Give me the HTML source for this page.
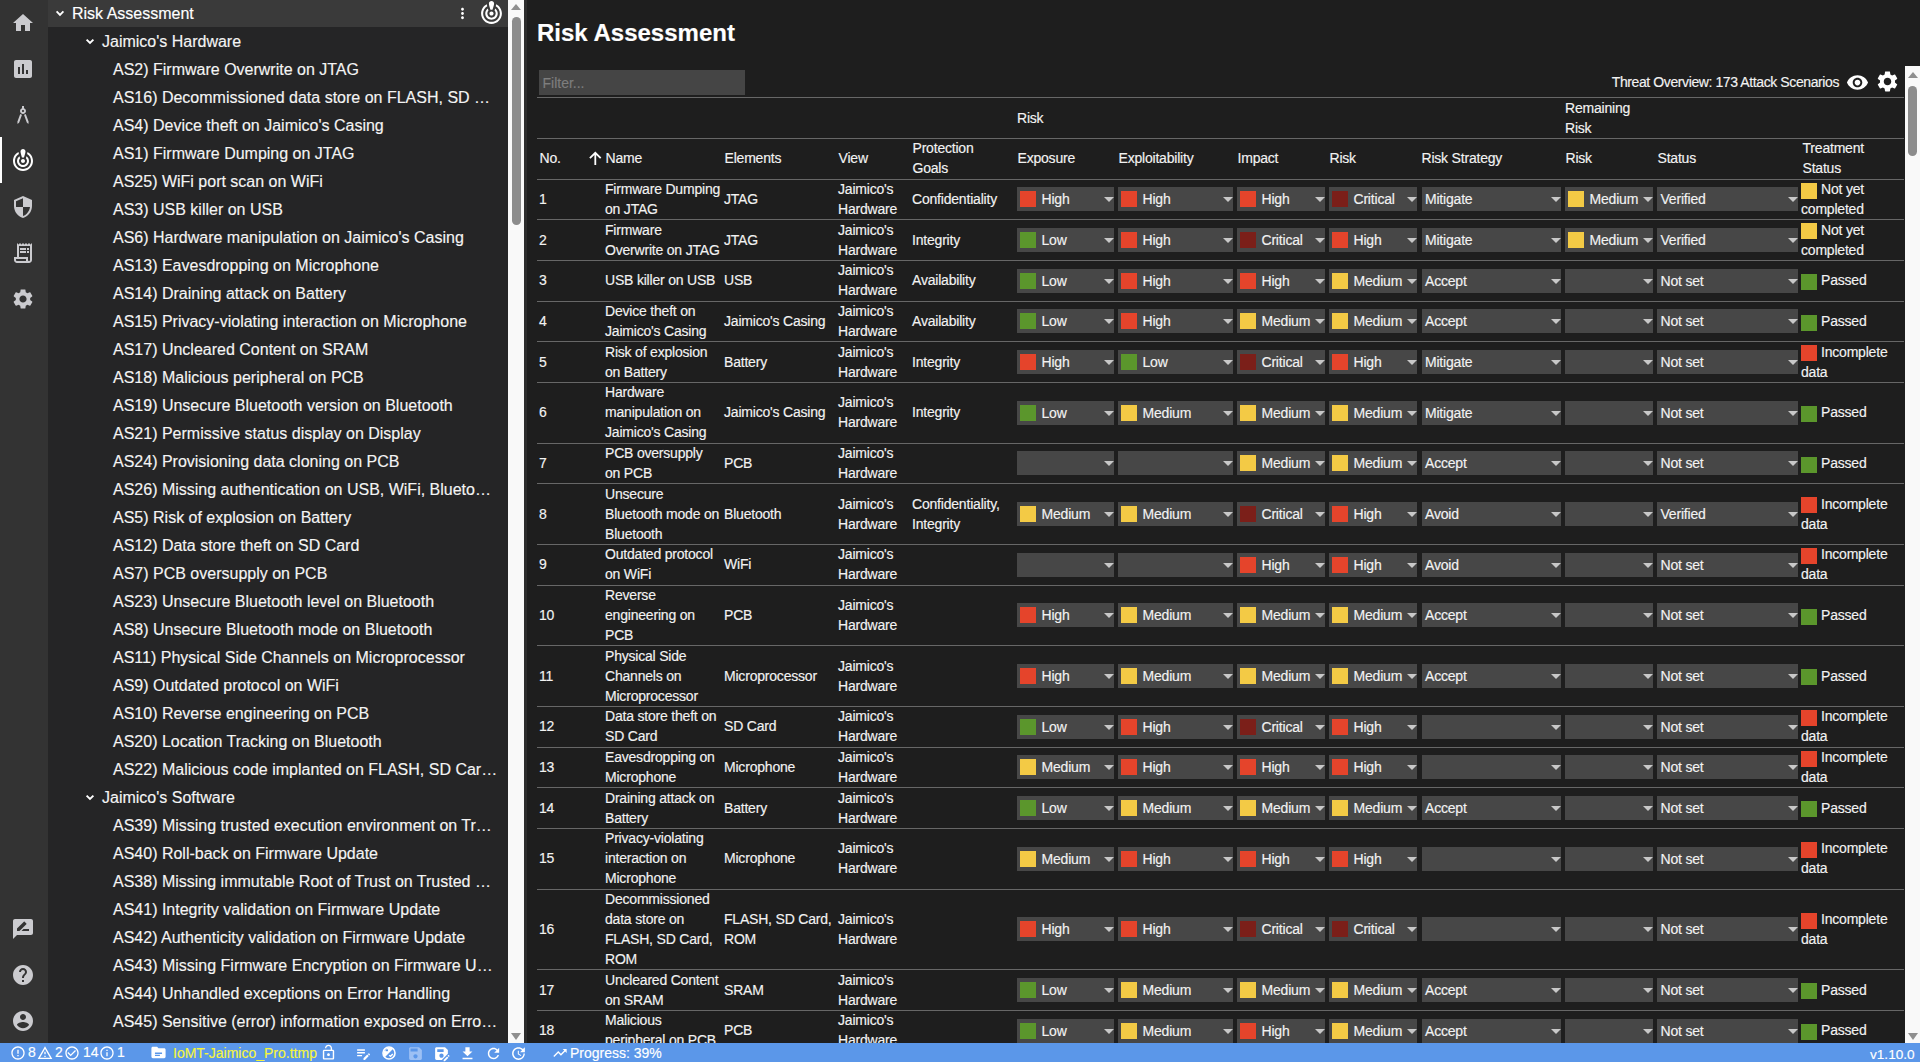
<!DOCTYPE html>
<html><head><meta charset="utf-8"><title>Risk Assessment</title>
<style>
*{box-sizing:border-box;margin:0;padding:0}
html,body{width:1920px;height:1062px;overflow:hidden;background:#1e1e1e;font-family:"Liberation Sans",sans-serif;color:#fff}
body{-webkit-text-stroke:0.15px currentColor}
.abs{position:absolute}
#act{position:absolute;left:0;top:0;width:48px;height:1043px;background:#333333}
#side{position:absolute;left:48px;top:0;width:460px;height:1043px;background:#252526;overflow:hidden}
#sidehdr{position:absolute;left:0;top:0;width:460px;height:27px;background:#3a3a3a}
.ti{position:absolute;height:28px;line-height:28px;font-size:16px;color:#f4f4f4;white-space:nowrap}
#sscroll{position:absolute;left:508px;top:0;width:16px;height:1043px;background:#f9f9f9}
#sash{position:absolute;left:524px;top:0;width:3px;height:1043px;background:#2d2d2d}
#main{position:absolute;left:527px;top:0;width:1378px;height:1043px;background:#1e1e1e;overflow:hidden}
#mscroll{position:absolute;left:1905px;top:66px;width:15px;height:977px;background:#f9f9f9}
#status{position:absolute;left:0;top:1043px;width:1920px;height:19px;background:#5b97e9;color:#fff;font-size:14px}
.hl{position:absolute;left:537px;width:1367px;height:1px;background:#676767}
.t{position:absolute;font-size:14px;letter-spacing:-0.2px;line-height:20px;color:#f2f2f2;white-space:nowrap}
.sel{position:absolute;height:24px;background:#474747}
.sw{position:absolute;width:16px;height:16px}
.st{position:absolute;font-size:14px;letter-spacing:-0.2px;line-height:24px;color:#f2f2f2;white-space:nowrap;top:0px}
.arr{position:absolute;right:0;top:10px;width:0;height:0;border-left:5px solid transparent;border-right:5px solid transparent;border-top:5px solid #c8c8c8}
</style></head><body>

<div id="act">
<div class="abs" style="left:0;top:137px;width:2px;height:46px;background:#ffffff"></div>
<svg style="position:absolute;left:11.3px;top:10.9px;width:24px;height:24px" viewBox="0 0 24 24"><path fill="#cbcbcf" d="M10 20v-6h4v6h5v-8h3L12 3 2 12h3v8z"/></svg>
<svg style="position:absolute;left:11.3px;top:56.9px;width:24px;height:24px" viewBox="0 0 24 24"><path fill="#cbcbcf" d="M19 3H5c-1.1 0-2 .9-2 2v14c0 1.1.9 2 2 2h14c1.1 0 2-.9 2-2V5c0-1.1-.9-2-2-2zM9 17H7v-7h2v7zm4 0h-2V7h2v10zm4 0h-2v-4h2v4z"/></svg>
<svg style="position:absolute;left:11.3px;top:102.9px;width:24px;height:24px" viewBox="0 0 24 24"><path fill="#cbcbcf" d="M6.36,18.78L6.61,21l1.62-1.54l2.77-7.6c-0.68-0.17-1.28-0.51-1.77-0.98L6.36,18.78z M14.77,10.88c-0.49,0.47-1.1,0.81-1.77,0.98l2.77,7.6L17.39,21l0.26-2.22L14.77,10.88z M15,8c0-1.3-0.84-2.4-2-2.82V3h-2v2.18C9.840,5.6,9,6.7,9,8c0,1.66,1.34,3,3,3S15,9.66,15,8z M12,9c-0.55,0-1-0.45-1-1c0-0.55,0.45-1,1-1s1,0.45,1,1C13,8.55,12.55,9,12,9z"/></svg>
<svg style="position:absolute;left:11.3px;top:148.9px;width:24px;height:24px" viewBox="0 0 24 24"><path fill="#ffffff" d="M14.5,2.5c0,1.5-1.5,6-1.5,6h-2c0,0-1.5-4.5-1.5-6C9.5,1.12,10.62,0,12,0S14.5,1.12,14.5,2.5z M12,10c-1.1,0-2,0.9-2,2s0.9,2,2,2s2-0.9,2-2S13.1,10,12,10z M16.08,5.11c0.18-0.75,0.33-1.47,0.39-2.06C19.75,4.690,22,8.08,22,12c0,5.52-4.48,10-10,10S2,17.52,2,12c0-3.92,2.25-7.31,5.53-8.95C7.6,3.64,7.74,4.37,7.92,5.11C5.58,6.51,4,9.07,4,12c0,4.42,3.58,8,8,8s8-3.58,8-8C20,9.07,18.42,6.51,16.08,5.11z M18,12c0,3.31-2.69,6-6,6s-6-2.69-6-6c0-2,0.98-3.77,2.48-4.86c0.23,0.81,0.65,2.07,0.65,2.07C8.43,9.93,8,10.92,8,12c0,2.21,1.79,4,4,4s4-1.79,4-4c0-1.08-0.43-2.07-1.13-2.79c0,0,0.41-1.22,0.65-2.07C17.02,8.23,18,10,18,12z"/></svg>
<svg style="position:absolute;left:11.3px;top:194.9px;width:24px;height:24px" viewBox="0 0 24 24"><path fill="#cbcbcf" d="M12 1L3 5v6c0 5.55 3.84 10.74 9 12 5.16-1.26 9-6.45 9-12V5l-9-4zm0 10.99h7c-.53 4.12-3.28 7.79-7 8.94V12H5V6.3l7-3.11v8.8z"/></svg>
<svg style="position:absolute;left:11.3px;top:240.9px;width:24px;height:24px" viewBox="0 0 24 24"><path fill="#cbcbcf" d="M19.5 3.5L18 2l-1.5 1.5L15 2l-1.5 1.5L12 2l-1.5 1.5L9 2 7.5 3.5 6 2v14H3v3c0 1.66 1.34 3 3 3h12c1.66 0 3-1.34 3-3V2l-1.5 1.5zM15 20H6c-.55 0-1-.45-1-1v-1h10v2zm4-1c0 .55-.45 1-1 1s-1-.45-1-1v-3H8V5h11v14zM9 7h6v2H9zM16 7h2v2h-2zM9 10h6v2H9zM16 10h2v2h-2z"/></svg>
<svg style="position:absolute;left:11.3px;top:286.9px;width:24px;height:24px" viewBox="0 0 24 24"><path fill="#cbcbcf" d="M19.14,12.94c0.04-0.3,0.06-0.61,0.06-0.94c0-0.32-0.02-0.64-0.07-0.94l2.03-1.58c0.18-0.14,0.23-0.41,0.12-0.61 l-1.92-3.32c-0.12-0.22-0.37-0.29-0.59-0.22l-2.39,0.96c-0.5-0.38-1.030-0.7-1.62-0.94L14.4,2.81c-0.04-0.24-0.24-0.41-0.48-0.41 h-3.84c-0.24,0-0.43,0.17-0.47,0.41L9.25,5.35C8.66,5.59,8.12,5.92,7.63,6.29L5.24,5.33c-0.22-0.08-0.47,0-0.59,0.22L2.74,8.87 C2.62,9.08,2.66,9.34,2.86,9.48l2.03,1.58C4.84,11.36,4.8,11.69,4.8,12s0.02,0.64,0.07,0.94l-2.03,1.58 c-0.18,0.14-0.23,0.41-0.12,0.61l1.92,3.32c0.12,0.22,0.37,0.29,0.59,0.22l2.39-0.96c0.5,0.38,1.03,0.7,1.62,0.94l0.36,2.54 c0.05,0.24,0.24,0.41,0.48,0.41h3.84c0.24,0,0.44-0.17,0.47-0.41l0.36-2.54c0.59-0.24,1.13-0.56,1.62-0.94l2.39,0.96 c0.22,0.08,0.47,0,0.59-0.22l1.92-3.32c0.12-0.22,0.07-0.47-0.12-0.61L19.14,12.94z M12,15.6c-1.98,0-3.6-1.62-3.6-3.6 s1.62-3.6,3.6-3.6s3.6,1.62,3.6,3.6S13.98,15.6,12,15.6z"/></svg>
<svg style="position:absolute;left:11.3px;top:916.9px;width:24px;height:24px" viewBox="0 0 24 24"><path fill="#cbcbcf" d="M20 2H4c-1.1 0-1.99.9-1.99 2L2 22l4-4h14c1.1 0 2-.9 2-2V4c0-1.1-.9-2-2-2zM6 14v-2.47l6.88-6.88c.2-.2.51-.2.71 0l1.77 1.770c.2.2.2.51 0 .71L8.47 14H6zm12 0h-7.5l2-2H18v2z"/></svg>
<svg style="position:absolute;left:11.3px;top:962.9px;width:24px;height:24px" viewBox="0 0 24 24"><path fill="#cbcbcf" d="M12 2C6.48 2 2 6.48 2 12s4.48 10 10 10 10-4.48 10-10S17.52 2 12 2zm1 17h-2v-2h2v2zm2.07-7.75l-.9.92C13.45 12.9 13 13.5 13 15h-2v-.5c0-1.1.45-2.1 1.17-2.83l1.24-1.26c.37-.36.59-.86.59-1.41 0-1.1-.9-2-2-2s-2 .9-2 2H8c0-2.21 1.79-4 4-4s4 1.79 4 4c0 .88-.36 1.68-.93 2.25z"/></svg>
<svg style="position:absolute;left:11.3px;top:1008.9px;width:24px;height:24px" viewBox="0 0 24 24"><path fill="#cbcbcf" d="M12 2C6.48 2 2 6.48 2 12s4.48 10 10 10 10-4.48 10-10S17.52 2 12 2zm0 3c1.66 0 3 1.34 3 3s-1.34 3-3 3-3-1.34-3-3 1.34-3 3-3zm0 14.2c-2.5 0-4.71-1.28-6-3.22.03-1.99 4-3.08 6-3.08 1.99 0 5.97 1.09 6 3.08-1.29 1.94-3.5 3.22-6 3.22z"/></svg>
</div>
<div id="side">
<div id="sidehdr"></div>
<svg class="abs" style="left:0;top:0;width:80px;height:28px"><path d="M8.6 11.4L12 14.8L15.4 11.4" fill="none" stroke="#fff" stroke-width="1.9"/></svg>
<div class="ti" style="left:24px;top:0px;height:27px;line-height:27px;color:#fff">Risk Assessment</div>
<svg style="position:absolute;left:405.5px;top:5px;width:17px;height:17px" viewBox="0 0 24 24"><path fill="#ffffff" d="M12 8c1.1 0 2-.9 2-2s-.9-2-2-2-2 .9-2 2 .9 2 2 2zm0 2c-1.1 0-2 .9-2 2s.9 2 2 2 2-.9 2-2-.9-2-2-2zm0 6c-1.1 0-2 .9-2 2s.9 2 2 2 2-.9 2-2-.9-2-2-2z"/></svg>
<svg style="position:absolute;left:431px;top:0.8px;width:25px;height:25px" viewBox="0 0 24 24"><path fill="#ffffff" d="M14.5,2.5c0,1.5-1.5,6-1.5,6h-2c0,0-1.5-4.5-1.5-6C9.5,1.12,10.62,0,12,0S14.5,1.12,14.5,2.5z M12,10c-1.1,0-2,0.9-2,2s0.9,2,2,2s2-0.9,2-2S13.1,10,12,10z M16.08,5.11c0.18-0.75,0.33-1.47,0.39-2.06C19.75,4.690,22,8.08,22,12c0,5.52-4.48,10-10,10S2,17.52,2,12c0-3.92,2.25-7.31,5.53-8.95C7.6,3.64,7.74,4.37,7.92,5.11C5.58,6.51,4,9.07,4,12c0,4.42,3.58,8,8,8s8-3.58,8-8C20,9.07,18.42,6.51,16.08,5.11z M18,12c0,3.31-2.69,6-6,6s-6-2.69-6-6c0-2,0.98-3.77,2.48-4.86c0.23,0.81,0.65,2.07,0.65,2.07C8.43,9.93,8,10.92,8,12c0,2.21,1.79,4,4,4s4-1.79,4-4c0-1.08-0.43-2.07-1.13-2.79c0,0,0.41-1.22,0.65-2.07C17.02,8.23,18,10,18,12z"/></svg>
<svg class="abs" style="left:30px;top:27px;width:28px;height:28px"><path d="M8.6 12.6L12 16L15.4 12.6" fill="none" stroke="#fff" stroke-width="1.9"/></svg>
<div class="ti" style="left:54px;top:28px;width:400px">Jaimico&#x27;s Hardware</div>
<div class="ti" style="left:65px;top:56px">AS2) Firmware Overwrite on JTAG</div>
<div class="ti" style="left:65px;top:84px">AS16) Decommissioned data store on FLASH, SD …</div>
<div class="ti" style="left:65px;top:112px">AS4) Device theft on Jaimico&#x27;s Casing</div>
<div class="ti" style="left:65px;top:140px">AS1) Firmware Dumping on JTAG</div>
<div class="ti" style="left:65px;top:168px">AS25) WiFi port scan on WiFi</div>
<div class="ti" style="left:65px;top:196px">AS3) USB killer on USB</div>
<div class="ti" style="left:65px;top:224px">AS6) Hardware manipulation on Jaimico&#x27;s Casing</div>
<div class="ti" style="left:65px;top:252px">AS13) Eavesdropping on Microphone</div>
<div class="ti" style="left:65px;top:280px">AS14) Draining attack on Battery</div>
<div class="ti" style="left:65px;top:308px">AS15) Privacy-violating interaction on Microphone</div>
<div class="ti" style="left:65px;top:336px">AS17) Uncleared Content on SRAM</div>
<div class="ti" style="left:65px;top:364px">AS18) Malicious peripheral on PCB</div>
<div class="ti" style="left:65px;top:392px">AS19) Unsecure Bluetooth version on Bluetooth</div>
<div class="ti" style="left:65px;top:420px">AS21) Permissive status display on Display</div>
<div class="ti" style="left:65px;top:448px">AS24) Provisioning data cloning on PCB</div>
<div class="ti" style="left:65px;top:476px">AS26) Missing authentication on USB, WiFi, Blueto…</div>
<div class="ti" style="left:65px;top:504px">AS5) Risk of explosion on Battery</div>
<div class="ti" style="left:65px;top:532px">AS12) Data store theft on SD Card</div>
<div class="ti" style="left:65px;top:560px">AS7) PCB oversupply on PCB</div>
<div class="ti" style="left:65px;top:588px">AS23) Unsecure Bluetooth level on Bluetooth</div>
<div class="ti" style="left:65px;top:616px">AS8) Unsecure Bluetooth mode on Bluetooth</div>
<div class="ti" style="left:65px;top:644px">AS11) Physical Side Channels on Microprocessor</div>
<div class="ti" style="left:65px;top:672px">AS9) Outdated protocol on WiFi</div>
<div class="ti" style="left:65px;top:700px">AS10) Reverse engineering on PCB</div>
<div class="ti" style="left:65px;top:728px">AS20) Location Tracking on Bluetooth</div>
<div class="ti" style="left:65px;top:756px">AS22) Malicious code implanted on FLASH, SD Car…</div>
<svg class="abs" style="left:30px;top:783px;width:28px;height:28px"><path d="M8.6 12.6L12 16L15.4 12.6" fill="none" stroke="#fff" stroke-width="1.9"/></svg>
<div class="ti" style="left:54px;top:784px;width:400px">Jaimico&#x27;s Software</div>
<div class="ti" style="left:65px;top:812px">AS39) Missing trusted execution environment on Tr…</div>
<div class="ti" style="left:65px;top:840px">AS40) Roll-back on Firmware Update</div>
<div class="ti" style="left:65px;top:868px">AS38) Missing immutable Root of Trust on Trusted …</div>
<div class="ti" style="left:65px;top:896px">AS41) Integrity validation on Firmware Update</div>
<div class="ti" style="left:65px;top:924px">AS42) Authenticity validation on Firmware Update</div>
<div class="ti" style="left:65px;top:952px">AS43) Missing Firmware Encryption on Firmware U…</div>
<div class="ti" style="left:65px;top:980px">AS44) Unhandled exceptions on Error Handling</div>
<div class="ti" style="left:65px;top:1008px">AS45) Sensitive (error) information exposed on Erro…</div>
</div>
<div id="sscroll"></div><div id="sash"></div>
<div class="abs" style="left:512px;top:17px;width:9px;height:208px;background:#8c8c8c;border-radius:5px"></div>
<div class="abs" style="left:511px;top:4px;width:0;height:0;border-left:5px solid transparent;border-right:5px solid transparent;border-bottom:6px solid #8f8f8f"></div>
<div class="abs" style="left:511px;top:1033px;width:0;height:0;border-left:5px solid transparent;border-right:5px solid transparent;border-top:7px solid #8f8f8f"></div>
<div class="abs" style="left:537px;top:15px;font-size:24px;font-weight:bold;line-height:36px;color:#fff">Risk Assessment</div>
<div class="abs" style="left:539px;top:70px;width:206px;height:24.5px;background:#454545"></div>
<div class="abs" style="left:542.5px;top:70.5px;font-size:14px;line-height:24px;color:#7e7e7e">Filter...</div>
<div class="t" style="right:81px;top:71.5px;line-height:20px;font-size:14px;letter-spacing:-0.4px">Threat Overview: 173 Attack Scenarios</div>
<svg style="position:absolute;left:1846px;top:71px;width:23px;height:23px" viewBox="0 0 24 24"><path fill="#ffffff" d="M12 4.5C7 4.5 2.73 7.61 1 12c1.730 4.39 6 7.5 11 7.5s9.27-3.11 11-7.5c-1.73-4.39-6-7.5-11-7.5zM12 17c-2.76 0-5-2.24-5-5s2.24-5 5-5 5 2.24 5 5-2.24 5-5 5zm0-8c-1.66 0-3 1.34-3 3s1.34 3 3 3 3-1.34 3-3-1.34-3-3-3z"/></svg>
<svg style="position:absolute;left:1875px;top:69px;width:25px;height:25px" viewBox="0 0 24 24"><path fill="#ffffff" d="M19.14,12.94c0.04-0.3,0.06-0.61,0.06-0.94c0-0.32-0.02-0.64-0.07-0.94l2.03-1.58c0.18-0.14,0.23-0.41,0.12-0.61 l-1.92-3.32c-0.12-0.22-0.37-0.29-0.59-0.22l-2.39,0.96c-0.5-0.38-1.030-0.7-1.62-0.94L14.4,2.81c-0.04-0.24-0.24-0.41-0.48-0.41 h-3.84c-0.24,0-0.43,0.17-0.47,0.41L9.25,5.35C8.66,5.59,8.12,5.92,7.63,6.29L5.24,5.33c-0.22-0.08-0.47,0-0.59,0.22L2.74,8.87 C2.62,9.08,2.66,9.34,2.86,9.48l2.03,1.58C4.84,11.36,4.8,11.69,4.8,12s0.02,0.64,0.07,0.94l-2.03,1.58 c-0.18,0.14-0.23,0.41-0.12,0.61l1.92,3.32c0.12,0.22,0.37,0.29,0.59,0.22l2.39-0.96c0.5,0.38,1.03,0.7,1.62,0.94l0.36,2.54 c0.05,0.24,0.24,0.41,0.48,0.41h3.84c0.24,0,0.44-0.17,0.47-0.41l0.36-2.54c0.59-0.24,1.13-0.56,1.62-0.94l2.39,0.96 c0.22,0.08,0.47,0,0.59-0.22l1.92-3.32c0.12-0.22,0.07-0.47-0.12-0.61L19.14,12.94z M12,15.6c-1.98,0-3.6-1.62-3.6-3.6 s1.62-3.6,3.6-3.6s3.6,1.62,3.6,3.6S13.98,15.6,12,15.6z"/></svg>
<div class="hl" style="top:97px"></div>
<div class="hl" style="top:138px"></div>
<div class="hl" style="top:178.5px"></div>
<div class="t" style="left:1017px;top:108px">Risk</div>
<div class="t" style="left:1565px;top:98px">Remaining<br>Risk</div>
<div class="t" style="left:539.5px;top:148.1px">No.</div>
<div class="t" style="left:605.5px;top:148.1px">Name</div>
<div class="t" style="left:724.5px;top:148.1px">Elements</div>
<div class="t" style="left:838.5px;top:148.1px">View</div>
<div class="t" style="left:912.5px;top:138.1px">Protection<br>Goals</div>
<div class="t" style="left:1017.5px;top:148.1px">Exposure</div>
<div class="t" style="left:1118.5px;top:148.1px">Exploitability</div>
<div class="t" style="left:1237.5px;top:148.1px">Impact</div>
<div class="t" style="left:1329.5px;top:148.1px">Risk</div>
<div class="t" style="left:1421.5px;top:148.1px">Risk Strategy</div>
<div class="t" style="left:1565.5px;top:148.1px">Risk</div>
<div class="t" style="left:1657.5px;top:148.1px">Status</div>
<div class="t" style="left:1802.5px;top:138.1px">Treatment<br>Status</div>
<svg class="abs" style="left:580px;top:145px;width:30px;height:30px"><path d="M15.3 7.8V20M9.9 13.2L15.3 7.8L20.7 13.2" fill="none" stroke="#fff" stroke-width="1.8"/></svg>
<div class="t" style="left:539px;top:189.03px">1</div>
<div class="t" style="left:605px;top:179.03px">Firmware Dumping<br>on JTAG</div>
<div class="t" style="left:724px;top:189.03px">JTAG</div>
<div class="t" style="left:838px;top:179.03px">Jaimico's<br>Hardware</div>
<div class="t" style="left:912px;top:189.03px">Confidentiality</div>
<div class="sel" style="left:1017px;top:187.33px;width:97px"><div class="sw" style="left:3px;top:4px;background:#e5442b"></div><div class="st" style="left:24.5px">High</div><div class="arr"></div></div>
<div class="sel" style="left:1118px;top:187.33px;width:114.6px"><div class="sw" style="left:3px;top:4px;background:#e5442b"></div><div class="st" style="left:24.5px">High</div><div class="arr"></div></div>
<div class="sel" style="left:1237px;top:187.33px;width:88px"><div class="sw" style="left:3px;top:4px;background:#e5442b"></div><div class="st" style="left:24.5px">High</div><div class="arr"></div></div>
<div class="sel" style="left:1329px;top:187.33px;width:88px"><div class="sw" style="left:3px;top:4px;background:#7b1f19"></div><div class="st" style="left:24.5px">Critical</div><div class="arr"></div></div>
<div class="sel" style="left:1421.5px;top:187.33px;width:139.5px"><div class="st" style="left:3.5px">Mitigate</div><div class="arr"></div></div>
<div class="sel" style="left:1565px;top:187.33px;width:88px"><div class="sw" style="left:3px;top:4px;background:#f3ca45"></div><div class="st" style="left:24.5px">Medium</div><div class="arr"></div></div>
<div class="sel" style="left:1657px;top:187.33px;width:140.5px"><div class="st" style="left:3.5px">Verified</div><div class="arr"></div></div>
<div class="t" style="left:1801px;top:179.03px"><span style="display:inline-block;width:16px;height:16px;background:#f3ca45;vertical-align:-4.5px;margin-right:4px"></span>Not yet<br>completed</div>
<div class="hl" style="top:219.17px"></div>
<div class="t" style="left:539px;top:229.70px">2</div>
<div class="t" style="left:605px;top:219.70px">Firmware<br>Overwrite on JTAG</div>
<div class="t" style="left:724px;top:229.70px">JTAG</div>
<div class="t" style="left:838px;top:219.70px">Jaimico's<br>Hardware</div>
<div class="t" style="left:912px;top:229.70px">Integrity</div>
<div class="sel" style="left:1017px;top:228.00px;width:97px"><div class="sw" style="left:3px;top:4px;background:#5b962c"></div><div class="st" style="left:24.5px">Low</div><div class="arr"></div></div>
<div class="sel" style="left:1118px;top:228.00px;width:114.6px"><div class="sw" style="left:3px;top:4px;background:#e5442b"></div><div class="st" style="left:24.5px">High</div><div class="arr"></div></div>
<div class="sel" style="left:1237px;top:228.00px;width:88px"><div class="sw" style="left:3px;top:4px;background:#7b1f19"></div><div class="st" style="left:24.5px">Critical</div><div class="arr"></div></div>
<div class="sel" style="left:1329px;top:228.00px;width:88px"><div class="sw" style="left:3px;top:4px;background:#e5442b"></div><div class="st" style="left:24.5px">High</div><div class="arr"></div></div>
<div class="sel" style="left:1421.5px;top:228.00px;width:139.5px"><div class="st" style="left:3.5px">Mitigate</div><div class="arr"></div></div>
<div class="sel" style="left:1565px;top:228.00px;width:88px"><div class="sw" style="left:3px;top:4px;background:#f3ca45"></div><div class="st" style="left:24.5px">Medium</div><div class="arr"></div></div>
<div class="sel" style="left:1657px;top:228.00px;width:140.5px"><div class="st" style="left:3.5px">Verified</div><div class="arr"></div></div>
<div class="t" style="left:1801px;top:219.70px"><span style="display:inline-block;width:16px;height:16px;background:#f3ca45;vertical-align:-4.5px;margin-right:4px"></span>Not yet<br>completed</div>
<div class="hl" style="top:259.83px"></div>
<div class="t" style="left:539px;top:270.37px">3</div>
<div class="t" style="left:605px;top:270.37px">USB killer on USB</div>
<div class="t" style="left:724px;top:270.37px">USB</div>
<div class="t" style="left:838px;top:260.37px">Jaimico's<br>Hardware</div>
<div class="t" style="left:912px;top:270.37px">Availability</div>
<div class="sel" style="left:1017px;top:268.67px;width:97px"><div class="sw" style="left:3px;top:4px;background:#5b962c"></div><div class="st" style="left:24.5px">Low</div><div class="arr"></div></div>
<div class="sel" style="left:1118px;top:268.67px;width:114.6px"><div class="sw" style="left:3px;top:4px;background:#e5442b"></div><div class="st" style="left:24.5px">High</div><div class="arr"></div></div>
<div class="sel" style="left:1237px;top:268.67px;width:88px"><div class="sw" style="left:3px;top:4px;background:#e5442b"></div><div class="st" style="left:24.5px">High</div><div class="arr"></div></div>
<div class="sel" style="left:1329px;top:268.67px;width:88px"><div class="sw" style="left:3px;top:4px;background:#f3ca45"></div><div class="st" style="left:24.5px">Medium</div><div class="arr"></div></div>
<div class="sel" style="left:1421.5px;top:268.67px;width:139.5px"><div class="st" style="left:3.5px">Accept</div><div class="arr"></div></div>
<div class="sel" style="left:1565px;top:268.67px;width:88px"><div class="arr"></div></div>
<div class="sel" style="left:1657px;top:268.67px;width:140.5px"><div class="st" style="left:3.5px">Not set</div><div class="arr"></div></div>
<div class="t" style="left:1801px;top:270.37px"><span style="display:inline-block;width:16px;height:16px;background:#5b962c;vertical-align:-4.5px;margin-right:4px"></span>Passed</div>
<div class="hl" style="top:300.50px"></div>
<div class="t" style="left:539px;top:311.03px">4</div>
<div class="t" style="left:605px;top:301.03px">Device theft on<br>Jaimico's Casing</div>
<div class="t" style="left:724px;top:311.03px">Jaimico's Casing</div>
<div class="t" style="left:838px;top:301.03px">Jaimico's<br>Hardware</div>
<div class="t" style="left:912px;top:311.03px">Availability</div>
<div class="sel" style="left:1017px;top:309.33px;width:97px"><div class="sw" style="left:3px;top:4px;background:#5b962c"></div><div class="st" style="left:24.5px">Low</div><div class="arr"></div></div>
<div class="sel" style="left:1118px;top:309.33px;width:114.6px"><div class="sw" style="left:3px;top:4px;background:#e5442b"></div><div class="st" style="left:24.5px">High</div><div class="arr"></div></div>
<div class="sel" style="left:1237px;top:309.33px;width:88px"><div class="sw" style="left:3px;top:4px;background:#f3ca45"></div><div class="st" style="left:24.5px">Medium</div><div class="arr"></div></div>
<div class="sel" style="left:1329px;top:309.33px;width:88px"><div class="sw" style="left:3px;top:4px;background:#f3ca45"></div><div class="st" style="left:24.5px">Medium</div><div class="arr"></div></div>
<div class="sel" style="left:1421.5px;top:309.33px;width:139.5px"><div class="st" style="left:3.5px">Accept</div><div class="arr"></div></div>
<div class="sel" style="left:1565px;top:309.33px;width:88px"><div class="arr"></div></div>
<div class="sel" style="left:1657px;top:309.33px;width:140.5px"><div class="st" style="left:3.5px">Not set</div><div class="arr"></div></div>
<div class="t" style="left:1801px;top:311.03px"><span style="display:inline-block;width:16px;height:16px;background:#5b962c;vertical-align:-4.5px;margin-right:4px"></span>Passed</div>
<div class="hl" style="top:341.17px"></div>
<div class="t" style="left:539px;top:351.70px">5</div>
<div class="t" style="left:605px;top:341.70px">Risk of explosion<br>on Battery</div>
<div class="t" style="left:724px;top:351.70px">Battery</div>
<div class="t" style="left:838px;top:341.70px">Jaimico's<br>Hardware</div>
<div class="t" style="left:912px;top:351.70px">Integrity</div>
<div class="sel" style="left:1017px;top:350.00px;width:97px"><div class="sw" style="left:3px;top:4px;background:#e5442b"></div><div class="st" style="left:24.5px">High</div><div class="arr"></div></div>
<div class="sel" style="left:1118px;top:350.00px;width:114.6px"><div class="sw" style="left:3px;top:4px;background:#5b962c"></div><div class="st" style="left:24.5px">Low</div><div class="arr"></div></div>
<div class="sel" style="left:1237px;top:350.00px;width:88px"><div class="sw" style="left:3px;top:4px;background:#7b1f19"></div><div class="st" style="left:24.5px">Critical</div><div class="arr"></div></div>
<div class="sel" style="left:1329px;top:350.00px;width:88px"><div class="sw" style="left:3px;top:4px;background:#e5442b"></div><div class="st" style="left:24.5px">High</div><div class="arr"></div></div>
<div class="sel" style="left:1421.5px;top:350.00px;width:139.5px"><div class="st" style="left:3.5px">Mitigate</div><div class="arr"></div></div>
<div class="sel" style="left:1565px;top:350.00px;width:88px"><div class="arr"></div></div>
<div class="sel" style="left:1657px;top:350.00px;width:140.5px"><div class="st" style="left:3.5px">Not set</div><div class="arr"></div></div>
<div class="t" style="left:1801px;top:341.70px"><span style="display:inline-block;width:16px;height:16px;background:#e5442b;vertical-align:-4.5px;margin-right:4px"></span>Incomplete<br>data</div>
<div class="hl" style="top:381.84px"></div>
<div class="t" style="left:539px;top:402.37px">6</div>
<div class="t" style="left:605px;top:382.37px">Hardware<br>manipulation on<br>Jaimico's Casing</div>
<div class="t" style="left:724px;top:402.37px">Jaimico's Casing</div>
<div class="t" style="left:838px;top:392.37px">Jaimico's<br>Hardware</div>
<div class="t" style="left:912px;top:402.37px">Integrity</div>
<div class="sel" style="left:1017px;top:400.67px;width:97px"><div class="sw" style="left:3px;top:4px;background:#5b962c"></div><div class="st" style="left:24.5px">Low</div><div class="arr"></div></div>
<div class="sel" style="left:1118px;top:400.67px;width:114.6px"><div class="sw" style="left:3px;top:4px;background:#f3ca45"></div><div class="st" style="left:24.5px">Medium</div><div class="arr"></div></div>
<div class="sel" style="left:1237px;top:400.67px;width:88px"><div class="sw" style="left:3px;top:4px;background:#f3ca45"></div><div class="st" style="left:24.5px">Medium</div><div class="arr"></div></div>
<div class="sel" style="left:1329px;top:400.67px;width:88px"><div class="sw" style="left:3px;top:4px;background:#f3ca45"></div><div class="st" style="left:24.5px">Medium</div><div class="arr"></div></div>
<div class="sel" style="left:1421.5px;top:400.67px;width:139.5px"><div class="st" style="left:3.5px">Mitigate</div><div class="arr"></div></div>
<div class="sel" style="left:1565px;top:400.67px;width:88px"><div class="arr"></div></div>
<div class="sel" style="left:1657px;top:400.67px;width:140.5px"><div class="st" style="left:3.5px">Not set</div><div class="arr"></div></div>
<div class="t" style="left:1801px;top:402.37px"><span style="display:inline-block;width:16px;height:16px;background:#5b962c;vertical-align:-4.5px;margin-right:4px"></span>Passed</div>
<div class="hl" style="top:442.50px"></div>
<div class="t" style="left:539px;top:453.04px">7</div>
<div class="t" style="left:605px;top:443.04px">PCB oversupply<br>on PCB</div>
<div class="t" style="left:724px;top:453.04px">PCB</div>
<div class="t" style="left:838px;top:443.04px">Jaimico's<br>Hardware</div>
<div class="sel" style="left:1017px;top:451.34px;width:97px"><div class="arr"></div></div>
<div class="sel" style="left:1118px;top:451.34px;width:114.6px"><div class="arr"></div></div>
<div class="sel" style="left:1237px;top:451.34px;width:88px"><div class="sw" style="left:3px;top:4px;background:#f3ca45"></div><div class="st" style="left:24.5px">Medium</div><div class="arr"></div></div>
<div class="sel" style="left:1329px;top:451.34px;width:88px"><div class="sw" style="left:3px;top:4px;background:#f3ca45"></div><div class="st" style="left:24.5px">Medium</div><div class="arr"></div></div>
<div class="sel" style="left:1421.5px;top:451.34px;width:139.5px"><div class="st" style="left:3.5px">Accept</div><div class="arr"></div></div>
<div class="sel" style="left:1565px;top:451.34px;width:88px"><div class="arr"></div></div>
<div class="sel" style="left:1657px;top:451.34px;width:140.5px"><div class="st" style="left:3.5px">Not set</div><div class="arr"></div></div>
<div class="t" style="left:1801px;top:453.04px"><span style="display:inline-block;width:16px;height:16px;background:#5b962c;vertical-align:-4.5px;margin-right:4px"></span>Passed</div>
<div class="hl" style="top:483.17px"></div>
<div class="t" style="left:539px;top:503.70px">8</div>
<div class="t" style="left:605px;top:483.70px">Unsecure<br>Bluetooth mode on<br>Bluetooth</div>
<div class="t" style="left:724px;top:503.70px">Bluetooth</div>
<div class="t" style="left:838px;top:493.70px">Jaimico's<br>Hardware</div>
<div class="t" style="left:912px;top:493.70px">Confidentiality,<br>Integrity</div>
<div class="sel" style="left:1017px;top:502.00px;width:97px"><div class="sw" style="left:3px;top:4px;background:#f3ca45"></div><div class="st" style="left:24.5px">Medium</div><div class="arr"></div></div>
<div class="sel" style="left:1118px;top:502.00px;width:114.6px"><div class="sw" style="left:3px;top:4px;background:#f3ca45"></div><div class="st" style="left:24.5px">Medium</div><div class="arr"></div></div>
<div class="sel" style="left:1237px;top:502.00px;width:88px"><div class="sw" style="left:3px;top:4px;background:#7b1f19"></div><div class="st" style="left:24.5px">Critical</div><div class="arr"></div></div>
<div class="sel" style="left:1329px;top:502.00px;width:88px"><div class="sw" style="left:3px;top:4px;background:#e5442b"></div><div class="st" style="left:24.5px">High</div><div class="arr"></div></div>
<div class="sel" style="left:1421.5px;top:502.00px;width:139.5px"><div class="st" style="left:3.5px">Avoid</div><div class="arr"></div></div>
<div class="sel" style="left:1565px;top:502.00px;width:88px"><div class="arr"></div></div>
<div class="sel" style="left:1657px;top:502.00px;width:140.5px"><div class="st" style="left:3.5px">Verified</div><div class="arr"></div></div>
<div class="t" style="left:1801px;top:493.70px"><span style="display:inline-block;width:16px;height:16px;background:#e5442b;vertical-align:-4.5px;margin-right:4px"></span>Incomplete<br>data</div>
<div class="hl" style="top:543.84px"></div>
<div class="t" style="left:539px;top:554.37px">9</div>
<div class="t" style="left:605px;top:544.37px">Outdated protocol<br>on WiFi</div>
<div class="t" style="left:724px;top:554.37px">WiFi</div>
<div class="t" style="left:838px;top:544.37px">Jaimico's<br>Hardware</div>
<div class="sel" style="left:1017px;top:552.67px;width:97px"><div class="arr"></div></div>
<div class="sel" style="left:1118px;top:552.67px;width:114.6px"><div class="arr"></div></div>
<div class="sel" style="left:1237px;top:552.67px;width:88px"><div class="sw" style="left:3px;top:4px;background:#e5442b"></div><div class="st" style="left:24.5px">High</div><div class="arr"></div></div>
<div class="sel" style="left:1329px;top:552.67px;width:88px"><div class="sw" style="left:3px;top:4px;background:#e5442b"></div><div class="st" style="left:24.5px">High</div><div class="arr"></div></div>
<div class="sel" style="left:1421.5px;top:552.67px;width:139.5px"><div class="st" style="left:3.5px">Avoid</div><div class="arr"></div></div>
<div class="sel" style="left:1565px;top:552.67px;width:88px"><div class="arr"></div></div>
<div class="sel" style="left:1657px;top:552.67px;width:140.5px"><div class="st" style="left:3.5px">Not set</div><div class="arr"></div></div>
<div class="t" style="left:1801px;top:544.37px"><span style="display:inline-block;width:16px;height:16px;background:#e5442b;vertical-align:-4.5px;margin-right:4px"></span>Incomplete<br>data</div>
<div class="hl" style="top:584.50px"></div>
<div class="t" style="left:539px;top:605.04px">10</div>
<div class="t" style="left:605px;top:585.04px">Reverse<br>engineering on<br>PCB</div>
<div class="t" style="left:724px;top:605.04px">PCB</div>
<div class="t" style="left:838px;top:595.04px">Jaimico's<br>Hardware</div>
<div class="sel" style="left:1017px;top:603.34px;width:97px"><div class="sw" style="left:3px;top:4px;background:#e5442b"></div><div class="st" style="left:24.5px">High</div><div class="arr"></div></div>
<div class="sel" style="left:1118px;top:603.34px;width:114.6px"><div class="sw" style="left:3px;top:4px;background:#f3ca45"></div><div class="st" style="left:24.5px">Medium</div><div class="arr"></div></div>
<div class="sel" style="left:1237px;top:603.34px;width:88px"><div class="sw" style="left:3px;top:4px;background:#f3ca45"></div><div class="st" style="left:24.5px">Medium</div><div class="arr"></div></div>
<div class="sel" style="left:1329px;top:603.34px;width:88px"><div class="sw" style="left:3px;top:4px;background:#f3ca45"></div><div class="st" style="left:24.5px">Medium</div><div class="arr"></div></div>
<div class="sel" style="left:1421.5px;top:603.34px;width:139.5px"><div class="st" style="left:3.5px">Accept</div><div class="arr"></div></div>
<div class="sel" style="left:1565px;top:603.34px;width:88px"><div class="arr"></div></div>
<div class="sel" style="left:1657px;top:603.34px;width:140.5px"><div class="st" style="left:3.5px">Not set</div><div class="arr"></div></div>
<div class="t" style="left:1801px;top:605.04px"><span style="display:inline-block;width:16px;height:16px;background:#5b962c;vertical-align:-4.5px;margin-right:4px"></span>Passed</div>
<div class="hl" style="top:645.17px"></div>
<div class="t" style="left:539px;top:665.70px">11</div>
<div class="t" style="left:605px;top:645.70px">Physical Side<br>Channels on<br>Microprocessor</div>
<div class="t" style="left:724px;top:665.70px">Microprocessor</div>
<div class="t" style="left:838px;top:655.70px">Jaimico's<br>Hardware</div>
<div class="sel" style="left:1017px;top:664.00px;width:97px"><div class="sw" style="left:3px;top:4px;background:#e5442b"></div><div class="st" style="left:24.5px">High</div><div class="arr"></div></div>
<div class="sel" style="left:1118px;top:664.00px;width:114.6px"><div class="sw" style="left:3px;top:4px;background:#f3ca45"></div><div class="st" style="left:24.5px">Medium</div><div class="arr"></div></div>
<div class="sel" style="left:1237px;top:664.00px;width:88px"><div class="sw" style="left:3px;top:4px;background:#f3ca45"></div><div class="st" style="left:24.5px">Medium</div><div class="arr"></div></div>
<div class="sel" style="left:1329px;top:664.00px;width:88px"><div class="sw" style="left:3px;top:4px;background:#f3ca45"></div><div class="st" style="left:24.5px">Medium</div><div class="arr"></div></div>
<div class="sel" style="left:1421.5px;top:664.00px;width:139.5px"><div class="st" style="left:3.5px">Accept</div><div class="arr"></div></div>
<div class="sel" style="left:1565px;top:664.00px;width:88px"><div class="arr"></div></div>
<div class="sel" style="left:1657px;top:664.00px;width:140.5px"><div class="st" style="left:3.5px">Not set</div><div class="arr"></div></div>
<div class="t" style="left:1801px;top:665.70px"><span style="display:inline-block;width:16px;height:16px;background:#5b962c;vertical-align:-4.5px;margin-right:4px"></span>Passed</div>
<div class="hl" style="top:705.84px"></div>
<div class="t" style="left:539px;top:716.37px">12</div>
<div class="t" style="left:605px;top:706.37px">Data store theft on<br>SD Card</div>
<div class="t" style="left:724px;top:716.37px">SD Card</div>
<div class="t" style="left:838px;top:706.37px">Jaimico's<br>Hardware</div>
<div class="sel" style="left:1017px;top:714.67px;width:97px"><div class="sw" style="left:3px;top:4px;background:#5b962c"></div><div class="st" style="left:24.5px">Low</div><div class="arr"></div></div>
<div class="sel" style="left:1118px;top:714.67px;width:114.6px"><div class="sw" style="left:3px;top:4px;background:#e5442b"></div><div class="st" style="left:24.5px">High</div><div class="arr"></div></div>
<div class="sel" style="left:1237px;top:714.67px;width:88px"><div class="sw" style="left:3px;top:4px;background:#7b1f19"></div><div class="st" style="left:24.5px">Critical</div><div class="arr"></div></div>
<div class="sel" style="left:1329px;top:714.67px;width:88px"><div class="sw" style="left:3px;top:4px;background:#e5442b"></div><div class="st" style="left:24.5px">High</div><div class="arr"></div></div>
<div class="sel" style="left:1421.5px;top:714.67px;width:139.5px"><div class="arr"></div></div>
<div class="sel" style="left:1565px;top:714.67px;width:88px"><div class="arr"></div></div>
<div class="sel" style="left:1657px;top:714.67px;width:140.5px"><div class="st" style="left:3.5px">Not set</div><div class="arr"></div></div>
<div class="t" style="left:1801px;top:706.37px"><span style="display:inline-block;width:16px;height:16px;background:#e5442b;vertical-align:-4.5px;margin-right:4px"></span>Incomplete<br>data</div>
<div class="hl" style="top:746.50px"></div>
<div class="t" style="left:539px;top:757.04px">13</div>
<div class="t" style="left:605px;top:747.04px">Eavesdropping on<br>Microphone</div>
<div class="t" style="left:724px;top:757.04px">Microphone</div>
<div class="t" style="left:838px;top:747.04px">Jaimico's<br>Hardware</div>
<div class="sel" style="left:1017px;top:755.34px;width:97px"><div class="sw" style="left:3px;top:4px;background:#f3ca45"></div><div class="st" style="left:24.5px">Medium</div><div class="arr"></div></div>
<div class="sel" style="left:1118px;top:755.34px;width:114.6px"><div class="sw" style="left:3px;top:4px;background:#e5442b"></div><div class="st" style="left:24.5px">High</div><div class="arr"></div></div>
<div class="sel" style="left:1237px;top:755.34px;width:88px"><div class="sw" style="left:3px;top:4px;background:#e5442b"></div><div class="st" style="left:24.5px">High</div><div class="arr"></div></div>
<div class="sel" style="left:1329px;top:755.34px;width:88px"><div class="sw" style="left:3px;top:4px;background:#e5442b"></div><div class="st" style="left:24.5px">High</div><div class="arr"></div></div>
<div class="sel" style="left:1421.5px;top:755.34px;width:139.5px"><div class="arr"></div></div>
<div class="sel" style="left:1565px;top:755.34px;width:88px"><div class="arr"></div></div>
<div class="sel" style="left:1657px;top:755.34px;width:140.5px"><div class="st" style="left:3.5px">Not set</div><div class="arr"></div></div>
<div class="t" style="left:1801px;top:747.04px"><span style="display:inline-block;width:16px;height:16px;background:#e5442b;vertical-align:-4.5px;margin-right:4px"></span>Incomplete<br>data</div>
<div class="hl" style="top:787.17px"></div>
<div class="t" style="left:539px;top:797.70px">14</div>
<div class="t" style="left:605px;top:787.70px">Draining attack on<br>Battery</div>
<div class="t" style="left:724px;top:797.70px">Battery</div>
<div class="t" style="left:838px;top:787.70px">Jaimico's<br>Hardware</div>
<div class="sel" style="left:1017px;top:796.00px;width:97px"><div class="sw" style="left:3px;top:4px;background:#5b962c"></div><div class="st" style="left:24.5px">Low</div><div class="arr"></div></div>
<div class="sel" style="left:1118px;top:796.00px;width:114.6px"><div class="sw" style="left:3px;top:4px;background:#f3ca45"></div><div class="st" style="left:24.5px">Medium</div><div class="arr"></div></div>
<div class="sel" style="left:1237px;top:796.00px;width:88px"><div class="sw" style="left:3px;top:4px;background:#f3ca45"></div><div class="st" style="left:24.5px">Medium</div><div class="arr"></div></div>
<div class="sel" style="left:1329px;top:796.00px;width:88px"><div class="sw" style="left:3px;top:4px;background:#f3ca45"></div><div class="st" style="left:24.5px">Medium</div><div class="arr"></div></div>
<div class="sel" style="left:1421.5px;top:796.00px;width:139.5px"><div class="st" style="left:3.5px">Accept</div><div class="arr"></div></div>
<div class="sel" style="left:1565px;top:796.00px;width:88px"><div class="arr"></div></div>
<div class="sel" style="left:1657px;top:796.00px;width:140.5px"><div class="st" style="left:3.5px">Not set</div><div class="arr"></div></div>
<div class="t" style="left:1801px;top:797.70px"><span style="display:inline-block;width:16px;height:16px;background:#5b962c;vertical-align:-4.5px;margin-right:4px"></span>Passed</div>
<div class="hl" style="top:827.84px"></div>
<div class="t" style="left:539px;top:848.37px">15</div>
<div class="t" style="left:605px;top:828.37px">Privacy-violating<br>interaction on<br>Microphone</div>
<div class="t" style="left:724px;top:848.37px">Microphone</div>
<div class="t" style="left:838px;top:838.37px">Jaimico's<br>Hardware</div>
<div class="sel" style="left:1017px;top:846.67px;width:97px"><div class="sw" style="left:3px;top:4px;background:#f3ca45"></div><div class="st" style="left:24.5px">Medium</div><div class="arr"></div></div>
<div class="sel" style="left:1118px;top:846.67px;width:114.6px"><div class="sw" style="left:3px;top:4px;background:#e5442b"></div><div class="st" style="left:24.5px">High</div><div class="arr"></div></div>
<div class="sel" style="left:1237px;top:846.67px;width:88px"><div class="sw" style="left:3px;top:4px;background:#e5442b"></div><div class="st" style="left:24.5px">High</div><div class="arr"></div></div>
<div class="sel" style="left:1329px;top:846.67px;width:88px"><div class="sw" style="left:3px;top:4px;background:#e5442b"></div><div class="st" style="left:24.5px">High</div><div class="arr"></div></div>
<div class="sel" style="left:1421.5px;top:846.67px;width:139.5px"><div class="arr"></div></div>
<div class="sel" style="left:1565px;top:846.67px;width:88px"><div class="arr"></div></div>
<div class="sel" style="left:1657px;top:846.67px;width:140.5px"><div class="st" style="left:3.5px">Not set</div><div class="arr"></div></div>
<div class="t" style="left:1801px;top:838.37px"><span style="display:inline-block;width:16px;height:16px;background:#e5442b;vertical-align:-4.5px;margin-right:4px"></span>Incomplete<br>data</div>
<div class="hl" style="top:888.51px"></div>
<div class="t" style="left:539px;top:919.04px">16</div>
<div class="t" style="left:605px;top:889.04px">Decommissioned<br>data store on<br>FLASH, SD Card,<br>ROM</div>
<div class="t" style="left:724px;top:909.04px">FLASH, SD Card,<br>ROM</div>
<div class="t" style="left:838px;top:909.04px">Jaimico's<br>Hardware</div>
<div class="sel" style="left:1017px;top:917.34px;width:97px"><div class="sw" style="left:3px;top:4px;background:#e5442b"></div><div class="st" style="left:24.5px">High</div><div class="arr"></div></div>
<div class="sel" style="left:1118px;top:917.34px;width:114.6px"><div class="sw" style="left:3px;top:4px;background:#e5442b"></div><div class="st" style="left:24.5px">High</div><div class="arr"></div></div>
<div class="sel" style="left:1237px;top:917.34px;width:88px"><div class="sw" style="left:3px;top:4px;background:#7b1f19"></div><div class="st" style="left:24.5px">Critical</div><div class="arr"></div></div>
<div class="sel" style="left:1329px;top:917.34px;width:88px"><div class="sw" style="left:3px;top:4px;background:#7b1f19"></div><div class="st" style="left:24.5px">Critical</div><div class="arr"></div></div>
<div class="sel" style="left:1421.5px;top:917.34px;width:139.5px"><div class="arr"></div></div>
<div class="sel" style="left:1565px;top:917.34px;width:88px"><div class="arr"></div></div>
<div class="sel" style="left:1657px;top:917.34px;width:140.5px"><div class="st" style="left:3.5px">Not set</div><div class="arr"></div></div>
<div class="t" style="left:1801px;top:909.04px"><span style="display:inline-block;width:16px;height:16px;background:#e5442b;vertical-align:-4.5px;margin-right:4px"></span>Incomplete<br>data</div>
<div class="hl" style="top:969.17px"></div>
<div class="t" style="left:539px;top:979.71px">17</div>
<div class="t" style="left:605px;top:969.71px">Uncleared Content<br>on SRAM</div>
<div class="t" style="left:724px;top:979.71px">SRAM</div>
<div class="t" style="left:838px;top:969.71px">Jaimico's<br>Hardware</div>
<div class="sel" style="left:1017px;top:978.01px;width:97px"><div class="sw" style="left:3px;top:4px;background:#5b962c"></div><div class="st" style="left:24.5px">Low</div><div class="arr"></div></div>
<div class="sel" style="left:1118px;top:978.01px;width:114.6px"><div class="sw" style="left:3px;top:4px;background:#f3ca45"></div><div class="st" style="left:24.5px">Medium</div><div class="arr"></div></div>
<div class="sel" style="left:1237px;top:978.01px;width:88px"><div class="sw" style="left:3px;top:4px;background:#f3ca45"></div><div class="st" style="left:24.5px">Medium</div><div class="arr"></div></div>
<div class="sel" style="left:1329px;top:978.01px;width:88px"><div class="sw" style="left:3px;top:4px;background:#f3ca45"></div><div class="st" style="left:24.5px">Medium</div><div class="arr"></div></div>
<div class="sel" style="left:1421.5px;top:978.01px;width:139.5px"><div class="st" style="left:3.5px">Accept</div><div class="arr"></div></div>
<div class="sel" style="left:1565px;top:978.01px;width:88px"><div class="arr"></div></div>
<div class="sel" style="left:1657px;top:978.01px;width:140.5px"><div class="st" style="left:3.5px">Not set</div><div class="arr"></div></div>
<div class="t" style="left:1801px;top:979.71px"><span style="display:inline-block;width:16px;height:16px;background:#5b962c;vertical-align:-4.5px;margin-right:4px"></span>Passed</div>
<div class="hl" style="top:1009.84px"></div>
<div class="t" style="left:539px;top:1020.37px">18</div>
<div class="t" style="left:605px;top:1010.37px">Malicious<br>peripheral on PCB</div>
<div class="t" style="left:724px;top:1020.37px">PCB</div>
<div class="t" style="left:838px;top:1010.37px">Jaimico's<br>Hardware</div>
<div class="sel" style="left:1017px;top:1018.67px;width:97px"><div class="sw" style="left:3px;top:4px;background:#5b962c"></div><div class="st" style="left:24.5px">Low</div><div class="arr"></div></div>
<div class="sel" style="left:1118px;top:1018.67px;width:114.6px"><div class="sw" style="left:3px;top:4px;background:#f3ca45"></div><div class="st" style="left:24.5px">Medium</div><div class="arr"></div></div>
<div class="sel" style="left:1237px;top:1018.67px;width:88px"><div class="sw" style="left:3px;top:4px;background:#e5442b"></div><div class="st" style="left:24.5px">High</div><div class="arr"></div></div>
<div class="sel" style="left:1329px;top:1018.67px;width:88px"><div class="sw" style="left:3px;top:4px;background:#f3ca45"></div><div class="st" style="left:24.5px">Medium</div><div class="arr"></div></div>
<div class="sel" style="left:1421.5px;top:1018.67px;width:139.5px"><div class="st" style="left:3.5px">Accept</div><div class="arr"></div></div>
<div class="sel" style="left:1565px;top:1018.67px;width:88px"><div class="arr"></div></div>
<div class="sel" style="left:1657px;top:1018.67px;width:140.5px"><div class="st" style="left:3.5px">Not set</div><div class="arr"></div></div>
<div class="t" style="left:1801px;top:1020.37px"><span style="display:inline-block;width:16px;height:16px;background:#5b962c;vertical-align:-4.5px;margin-right:4px"></span>Passed</div>
<div class="hl" style="top:1050.51px"></div>
<div id="mscroll"></div>
<div class="abs" style="left:1908px;top:72px;width:0;height:0;border-left:5px solid transparent;border-right:5px solid transparent;border-bottom:6px solid #8f8f8f"></div>
<div class="abs" style="left:1908px;top:86px;width:9px;height:70px;background:#8c8c8c;border-radius:5px"></div>
<div class="abs" style="left:1908px;top:1033px;width:0;height:0;border-left:5px solid transparent;border-right:5px solid transparent;border-top:7px solid #8f8f8f"></div>
<div id="status">
<svg style="position:absolute;left:10px;top:2px;width:16px;height:16px" viewBox="0 0 24 24"><path fill="#fff" d="M11 15h2v2h-2zm0-8h2v6h-2zm.99-5C6.47 2 2 6.48 2 12s4.47 10 9.99 10C17.52 22 22 17.52 22 12S17.52 2 11.99 2zM12 20c-4.42 0-8-3.58-8-8s3.58-8 8-8 8 3.58 8 8-3.58 8-8 8z"/></svg>
<div class="abs" style="left:28px;top:0;line-height:19px">8</div>
<svg style="position:absolute;left:37px;top:2px;width:16px;height:16px" viewBox="0 0 24 24"><path fill="#fff" d="M12 5.99L19.53 19H4.47L12 5.99M12 2L1 21h22L12 2zm1 14h-2v2h2v-2zm0-6h-2v4h2v-4z"/></svg>
<div class="abs" style="left:55px;top:0;line-height:19px">2</div>
<svg style="position:absolute;left:64px;top:2px;width:16px;height:16px" viewBox="0 0 24 24"><path fill="#fff" d="M16.59 7.58L10 14.17l-3.59-3.58L5 12l5 5 8-8zM12 2C6.48 2 2 6.48 2 12s4.48 10 10 10 10-4.48 10-10S17.52 2 12 2zm0 18c-4.42 0-8-3.58-8-8s3.58-8 8-8 8 3.58 8 8-3.58 8-8 8z"/></svg>
<div class="abs" style="left:83px;top:0;line-height:19px">14</div>
<svg style="position:absolute;left:99px;top:2px;width:16px;height:16px" viewBox="0 0 24 24"><path fill="#fff" d="M11 7h2v2h-2zm0 4h2v6h-2zm1-9C6.48 2 2 6.48 2 12s4.48 10 10 10 10-4.48 10-10S17.52 2 12 2zm0 18c-4.42 0-8-3.58-8-8s3.58-8 8-8 8 3.58 8 8-3.58 8-8 8z"/></svg>
<div class="abs" style="left:117px;top:0;line-height:19px">1</div>
<svg style="position:absolute;left:150px;top:1px;width:17px;height:17px" viewBox="0 0 24 24"><path fill="#fff" d="M20 6h-8l-2-2H4c-1.1 0-1.99.9-1.99 2L2 18c0 1.1.9 2 2 2h16c1.1 0 2-.9 2-2V8c0-1.1-.9-2-2-2zM7 12h10v2H7zM7 15h7v2H7z"/></svg>
<div class="abs" style="left:173px;top:1px;line-height:19px;color:#f5f53c;font-size:14px">IoMT-Jaimico_Pro.ttmp</div>
<svg style="position:absolute;left:320px;top:1px;width:17px;height:17px" viewBox="0 0 24 24"><path fill="#fff" d="M12 17c1.1 0 2-.9 2-2s-.9-2-2-2-2 .9-2 2 .9 2 2 2zm6-9h-1V6c0-2.76-2.24-5-5-5S7 3.24 7 6h1.9c0-1.71 1.39-3.1 3.1-3.1 1.71 0 3.1 1.39 3.1 3.1v2H6c-1.1 0-2 .9-2 2v10c0 1.1.9 2 2 2h12c1.1 0 2-.9 2-2V10c0-1.1-.9-2-2-2zm0 12H6V10h12v10z"/></svg>
<svg style="position:absolute;left:354.5px;top:1.5px;width:17px;height:17px" viewBox="0 0 24 24"><path fill="#fff" d="M3 10h11v2H3v-2zm0-2h11V6H3v2zm0 8h7v-2H3v2zm15.01-3.13l.71-.71c.39-.39 1.02-.39 1.41 0l.71.71c.39.39.39 1.02 0 1.41l-.71.71-2.12-2.12zm-.71.71l-5.3 5.3V21h2.12l5.3-5.3-2.12-2.12z"/></svg>
<svg style="position:absolute;left:382px;top:2.8px;width:14px;height:14px" viewBox="0 0 14 14"><circle cx="7" cy="7" r="6" fill="none" stroke="#fff" stroke-width="1.6"/><path d="M2.8 11.2A6 6 0 0 1 11.2 2.8z" fill="#fff"/><rect x="3.6" y="3.4" width="2.4" height="1.8" fill="#5b97e9"/><path d="M7.2 9.2l1.3 1.1 2.3-2.4" fill="none" stroke="#fff" stroke-width="1.4"/></svg>
<svg style="position:absolute;left:406.5px;top:1.5px;width:17px;height:17px" viewBox="0 0 24 24"><path fill="#9cc0f4" d="M17 3H5c-1.11 0-2 .9-2 2v14c0 1.1.89 2 2 2h14c1.1 0 2-.9 2-2V7l-4-4zm-5 16c-1.66 0-3-1.34-3-3s1.34-3 3-3 3 1.34 3 3-1.34 3-3 3zm3-10H5V5h10v4z"/></svg>
<svg style="position:absolute;left:432.5px;top:1.5px;width:17px;height:17px" viewBox="0 0 24 24"><path fill="#fff" d="M21,12.4V7l-4-4H5C3.89,3,3,3.9,3,5v14c0,1.1,0.89,2,2,2h7.4L21,12.4z M15,15c0,1.66-1.34,3-3,3s-3-1.34-3-3s1.34-3,3-3 S15,13.34,15,15z M6,6h9v4H6V6z M19.99,16.25l1.77,1.77L16.77,23H15v-1.77L19.99,16.25z M23.25,16.02l-0.85,0.85l-1.77-1.77l0.85-0.85 c0.2-0.2,0.51-0.2,0.71,0l1.06,1.06C23.45,15.51,23.45,15.82,23.25,16.02z"/></svg>
<svg style="position:absolute;left:458.5px;top:1.5px;width:17px;height:17px" viewBox="0 0 24 24"><path fill="#fff" d="M19 9h-4V3H9v6H5l7 7 7-7zM5 18v2h14v-2H5z"/></svg>
<svg style="position:absolute;left:484.5px;top:1.5px;width:17px;height:17px" viewBox="0 0 24 24"><path fill="#fff" d="M17.65 6.35C16.2 4.9 14.21 4 12 4c-4.42 0-7.99 3.58-7.990 8s3.57 8 7.99 8c3.73 0 6.84-2.55 7.73-6h-2.08c-.82 2.33-3.04 4-5.65 4-3.31 0-6-2.69-6-6s2.69-6 6-6c1.66 0 3.14.69 4.22 1.78L13 11h7V4l-2.35 2.35z"/></svg>
<svg style="position:absolute;left:510px;top:1.5px;width:17px;height:17px" viewBox="0 0 24 24"><path fill="#fff" d="M21 10.12h-6.78l2.74-2.82c-2.73-2.7-7.15-2.8-9.88-.1-2.73 2.71-2.73 7.08 0 9.79s7.15 2.71 9.88 0C18.32 15.650 19 14.08 19 12.1h2c0 1.98-.88 4.55-2.64 6.29-3.51 3.48-9.21 3.48-12.72 0-3.5-3.47-3.53-9.11-.02-12.58s9.14-3.47 12.65 0L21 3v7.12zM12.5 8v4.25l3.5 2.08-.72 1.21L11 13V8h1.5z"/></svg>
<svg style="position:absolute;left:552px;top:2px;width:16px;height:16px" viewBox="0 0 24 24"><path fill="#fff" d="M16 6l2.29 2.29-4.88 4.88-4-4L2 16.59 3.41 18l6-6 4 4 6.3-6.29L22 12V6z"/></svg>
<div class="abs" style="left:570px;top:1px;line-height:19px;font-size:14px">Progress: 39%</div>
<div class="abs" style="left:1870px;top:1.5px;line-height:19px;font-size:13.6px">v1.10.0</div>
</div>
</body></html>
